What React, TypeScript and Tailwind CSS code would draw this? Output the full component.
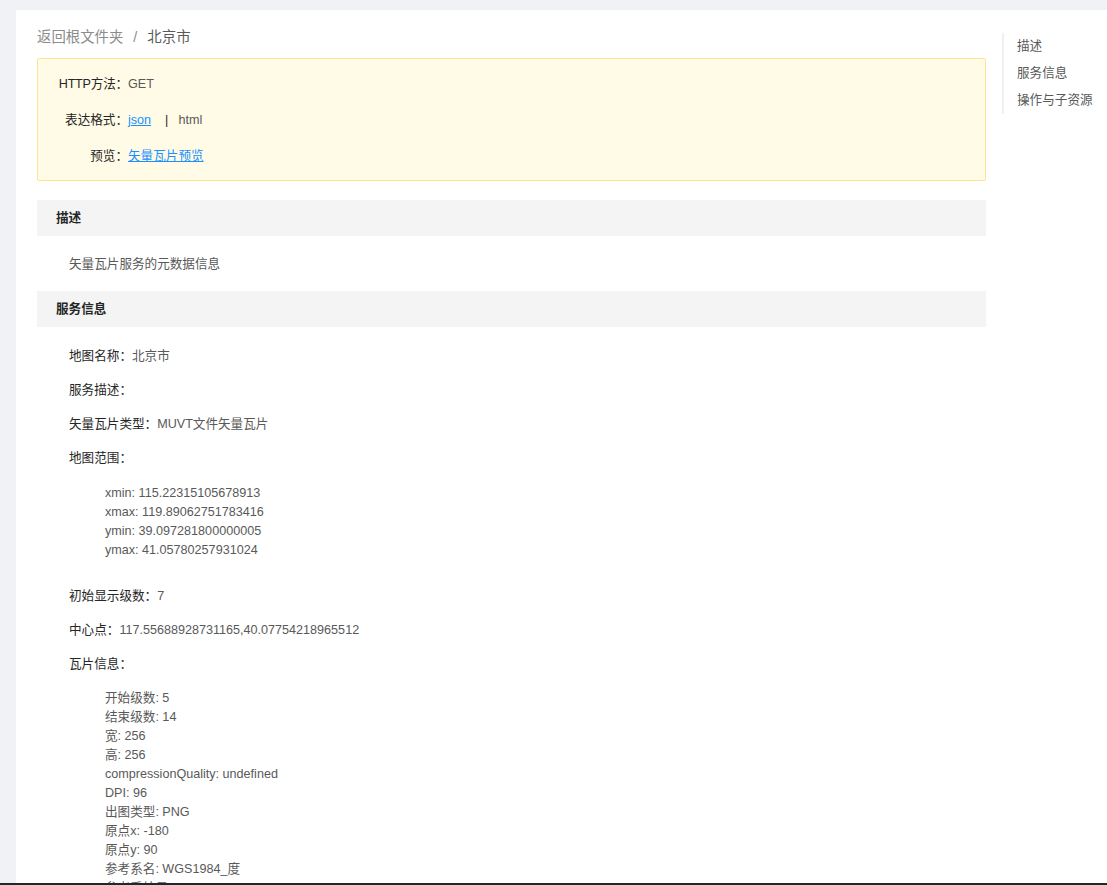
import React from "react";

const extent = [
  "xmin: 115.22315105678913",
  "xmax: 119.89062751783416",
  "ymin: 39.097281800000005",
  "ymax: 41.05780257931024",
];

const tileInfo = [
  "开始级数: 5",
  "结束级数: 14",
  "宽: 256",
  "高: 256",
  "compressionQuality: undefined",
  "DPI: 96",
  "出图类型: PNG",
  "原点x: -180",
  "原点y: 90",
  "参考系名: WGS1984_度",
  "参考系编号: 4326",
  "分辨率: ",
];

function Row({ label, value }: { label: string; value?: string }) {
  return (
    <div className="h-[34px] flex items-center">
      <span className="text-[#262626]">{label}：</span>
      {value !== undefined && <span className="text-[#595959]">{value}</span>}
    </div>
  );
}

function SectionHeader({ title }: { title: string }) {
  return (
    <div className="h-9 bg-[#f4f4f4] pl-[19px] flex items-center font-bold text-[#262626]">
      {title}
    </div>
  );
}

export default function App() {
  return (
    <div className="h-[885px] overflow-hidden flex flex-col bg-[#f0f2f5] text-[12.6px] font-['Liberation_Sans','Noto_Sans_CJK_SC',sans-serif]">
      <div className="flex-1 min-h-0 pt-[10px] pl-4">
        <div className="h-full bg-white flex overflow-hidden">
          <div className="w-[970px] shrink-0 pl-[21px]">
            <div className="pt-4 leading-[22px] text-[14.4px] flex items-center mb-[10px]">
              <span className="text-[#8c8c8c]">返回根文件夹</span>
              <span className="mx-[10px] text-[#8c8c8c]">/</span>
              <span className="text-[#595959]">北京市</span>
            </div>

            <div className="border border-[#ffe58f] bg-[#fffbe6] rounded-[2px] pt-[7px] pb-[6px]">
              <div className="h-9 flex items-center">
                <span className="w-[90px] text-right text-[#262626] tracking-[-0.2px]">HTTP方法：</span>
                <span className="text-[#595959]">GET</span>
              </div>
              <div className="h-9 flex items-center">
                <span className="w-[90px] text-right text-[#262626]">表达格式：</span>
                <a className="text-[#1890ff] underline" href="#">json</a>
                <span className="ml-[14px] mr-[10px] text-[#262626]">|</span>
                <span className="text-[#595959]">html</span>
              </div>
              <div className="h-9 flex items-center">
                <span className="w-[90px] text-right text-[#262626]">预览：</span>
                <a className="text-[#1890ff] underline" href="#">矢量瓦片预览</a>
              </div>
            </div>

            <div className="mt-[19px]">
              <SectionHeader title="描述" />
              <div className="h-[55px] flex items-center pl-8 pt-px text-[#595959]">
                矢量瓦片服务的元数据信息
              </div>
              <SectionHeader title="服务信息" />
              <div className="pl-8 pt-[12px]">
                <Row label="地图名称" value="北京市" />
                <Row label="服务描述" />
                <Row label="矢量瓦片类型" value="MUVT文件矢量瓦片" />
                <Row label="地图范围" />
                <ul className="pl-9 mt-[9px] mb-[19px] leading-[19px] text-[#595959]">
                  {extent.map((e) => (
                    <li key={e}>{e}</li>
                  ))}
                </ul>
                <Row label="初始显示级数" value="7" />
                <Row label="中心点" value="117.55688928731165,40.07754218965512" />
                <Row label="瓦片信息" />
                <ul className="pl-9 mt-2 leading-[19px] text-[#595959]">
                  {tileInfo.map((e) => (
                    <li key={e}>{e}</li>
                  ))}
                </ul>
              </div>
            </div>
          </div>

          <nav className="mt-[23px] ml-4 self-start border-l-2 border-[#f0f0f0] pl-[13px] text-[#595959]">
            <div className="h-[27px] leading-[27px]">描述</div>
            <div className="h-[27px] leading-[27px]">服务信息</div>
            <div className="h-[27px] leading-[27px]">操作与子资源</div>
          </nav>
        </div>
      </div>
      <div className="h-[2px] shrink-0 bg-[#1d2a2c]" />
    </div>
  );
}
